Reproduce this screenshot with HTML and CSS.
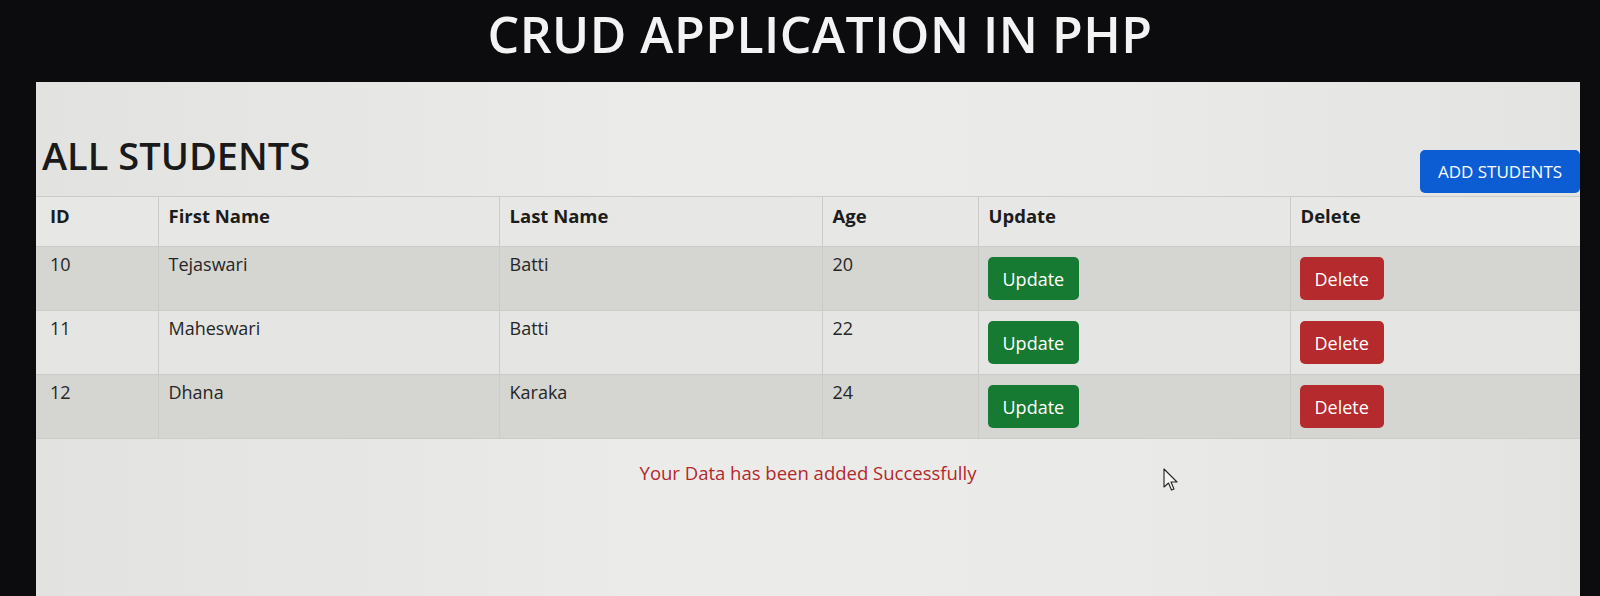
FILE: index.html
```html
<!DOCTYPE html>
<html lang="en">
<head>
<meta charset="utf-8">
<title>CRUD Application in PHP</title>
<link rel="stylesheet" href="styles.css">
</head>
<body>
<div class="page">
  <header class="topbar">
    <h1 class="title">CRUD APPLICATION IN PHP</h1>
  </header>
  <main class="panel">
    <div class="panel-head">
      <h2 class="heading">ALL STUDENTS</h2>
      <button class="btn btn-add">ADD STUDENTS</button>
    </div>
    <table class="grid">
      <colgroup>
        <col class="c-id"><col class="c-first"><col class="c-last"><col class="c-age"><col class="c-upd"><col class="c-del">
      </colgroup>
      <thead>
        <tr><th>ID</th><th>First Name</th><th>Last Name</th><th>Age</th><th>Update</th><th>Delete</th></tr>
      </thead>
      <tbody>
        <tr class="odd"><td>10</td><td>Tejaswari</td><td>Batti</td><td>20</td><td class="act"><button class="btn btn-upd">Update</button></td><td class="act"><button class="btn btn-del">Delete</button></td></tr>
        <tr class="even"><td>11</td><td>Maheswari</td><td>Batti</td><td>22</td><td class="act"><button class="btn btn-upd">Update</button></td><td class="act"><button class="btn btn-del">Delete</button></td></tr>
        <tr class="odd"><td>12</td><td>Dhana</td><td>Karaka</td><td>24</td><td class="act"><button class="btn btn-upd">Update</button></td><td class="act"><button class="btn btn-del">Delete</button></td></tr>
      </tbody>
    </table>
    <p class="message">Your Data has been added Successfully</p>
    <svg class="cursor" width="16" height="24" viewBox="0 0 16 24"><path d="M1 1 L1 19 L5.5 15 L8.5 22 L11 21 L8 14 L14 14 Z" fill="#f4f4f4" stroke="#222" stroke-width="1.1" stroke-linejoin="round"/></svg>
  </main>
</div>
</body>
</html>
```

FILE: styles.css
```css
* { box-sizing: border-box; }
html, body { margin: 0; padding: 0; }
body {
  background: #0c0c0f;
  font-family: "Open Sans", "Noto Sans", sans-serif;
  color: #1c1c1c;
  height: 596px;
  overflow: hidden;
}
.page {
  display: flex;
  flex-direction: column;
  height: 596px;
  padding: 0 20px 0 36px;
}
.topbar {
  height: 82px;
  display: flex;
  justify-content: center;
  padding-left: 24px;
}
.title {
  margin: 0;
  padding-top: 2px;
  font-size: 50px;
  line-height: 64px;
  font-weight: 600;
  color: #f3f3f3;
  letter-spacing: 0.5px;
}
.panel {
  position: relative;
  flex: 1;
  background: linear-gradient(90deg, #e2e3e0 0%, #ebecea 40%, #eaebe9 70%, #e3e4e1 100%);
  padding-top: 49px;
}
.panel-head {
  display: flex;
  justify-content: space-between;
  align-items: flex-end;
  height: 65px;
}
.heading {
  margin: 0 0 17px 6px;
  font-size: 38px;
  line-height: 48px;
  font-weight: 600;
  color: #1a1a1a;
}
.btn {
  font-family: "Open Sans", "Noto Sans", sans-serif;
  border: none;
  color: #fff;
  border-radius: 5px;
  height: 43px;
  padding: 0 15px;
  font-size: 18px;
  cursor: pointer;
}
.btn-add {
  background: #0c5cd3;
  margin-bottom: 3px;
  width: 160px;
  font-size: 17px;
}
.grid {
  width: 100%;
  border-collapse: collapse;
  table-layout: fixed;
}
.c-id { width: 122px; }
.c-first { width: 341px; }
.c-last { width: 323px; }
.c-age { width: 156px; }
.c-upd { width: 312px; }
.c-del { width: 290px; }
th, td {
  text-align: left;
  vertical-align: top;
  border: 1px solid #cbcbc7;
  border-left: 1px solid #c6c6c2;
  padding: 5px 10px;
}
th:first-child, td:first-child { border-left: none; padding-left: 14px; }
th:last-child, td:last-child { border-right: none; }
thead tr { height: 50px; background: #e7e8e6; }
th {
  font-size: 18.5px;
  font-weight: 700;
  line-height: 26px;
  padding-top: 6px;
}
tbody tr { height: 64px; }
td {
  font-size: 18px;
  line-height: 24px;
  color: #262626;
}
tr.odd { background: #d5d5d1; }
tr.even { background: #e5e6e4; }
td.act { padding-top: 10px; padding-left: 9px; }
.btn-upd { background: #177a32; }
.btn-del { background: #b52a2c; }
.message {
  margin: 21px 0 0;
  text-align: center;
  color: #b3282b;
  font-size: 18.5px;
  line-height: 26px;
}
.cursor {
  position: absolute;
  left: 1127px;
  top: 386px;
}
```
